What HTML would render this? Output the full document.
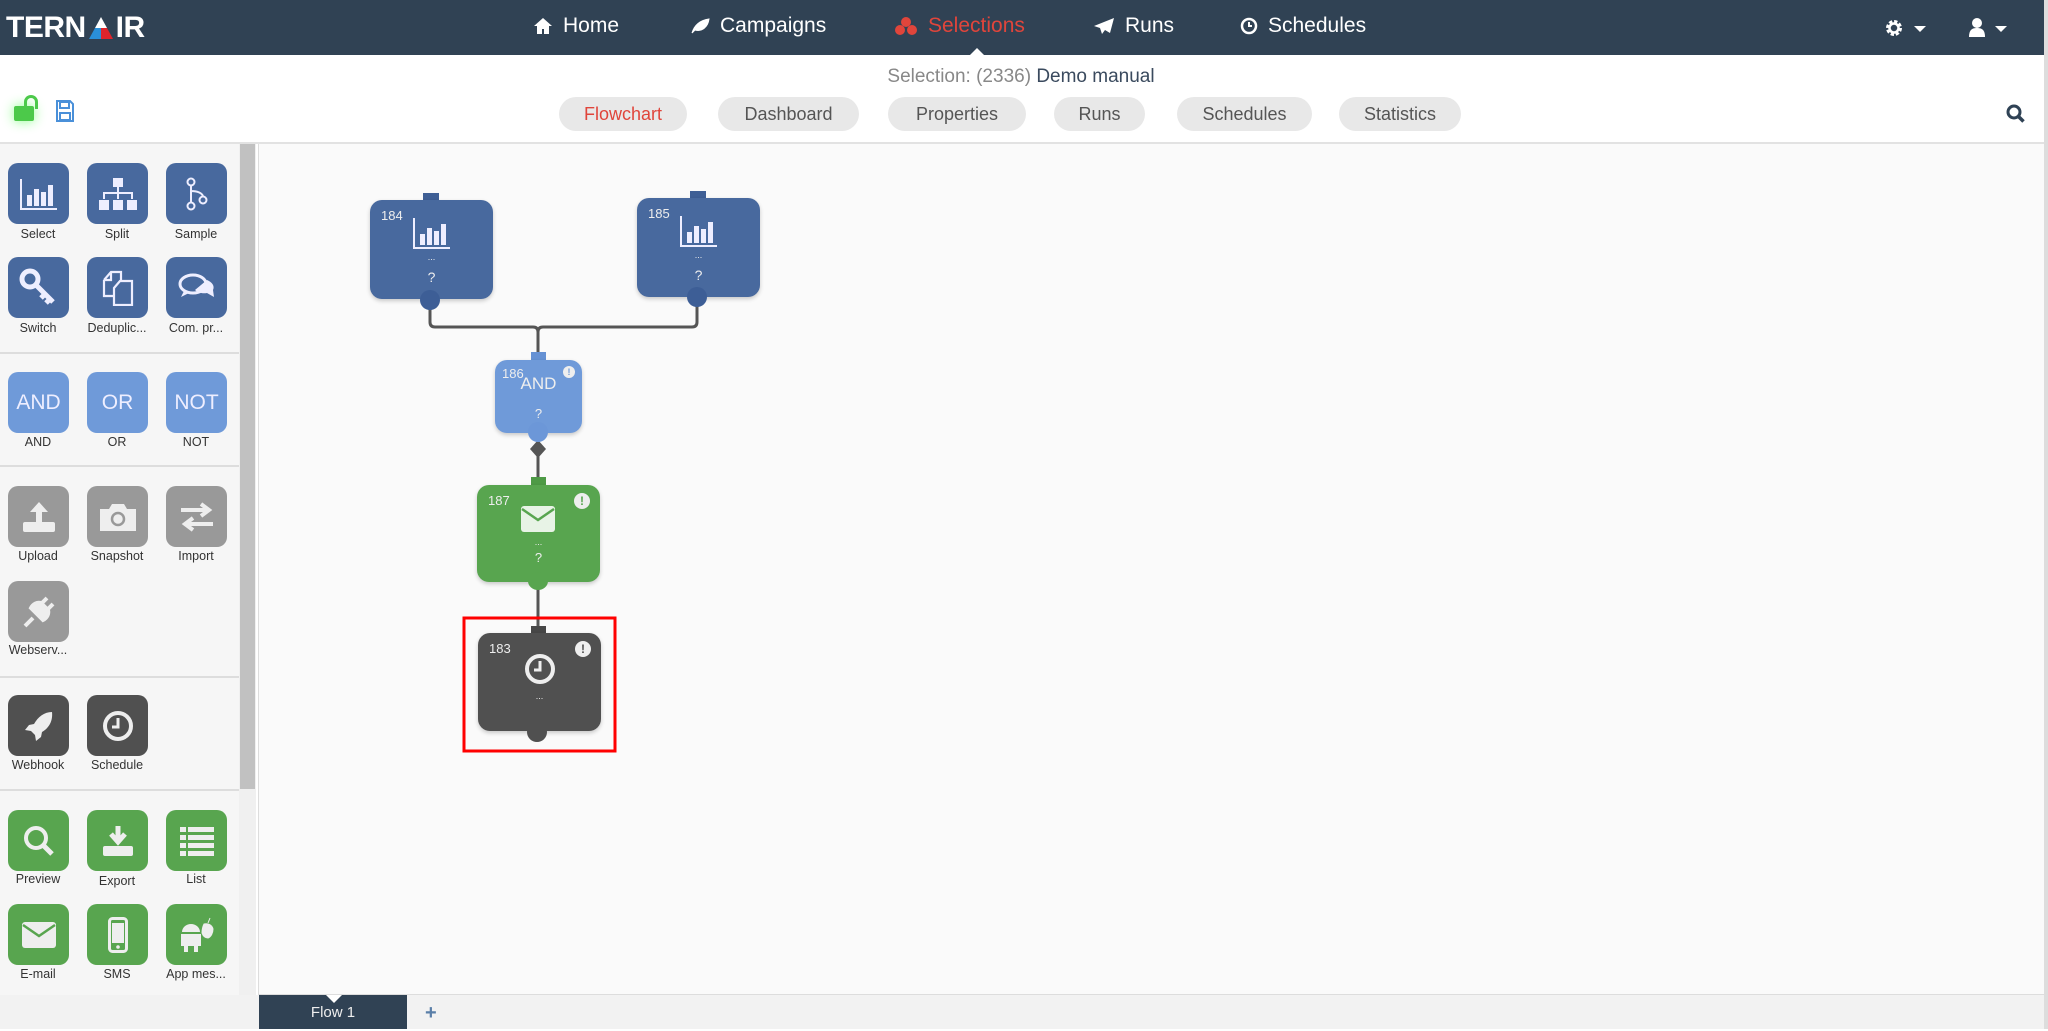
<!DOCTYPE html>
<html><head><meta charset="utf-8"><style>
*{margin:0;padding:0;box-sizing:border-box}
body{width:2048px;height:1029px;overflow:hidden;position:relative;background:#fff;font-family:"Liberation Sans",sans-serif}
.abs{position:absolute}
#nav{left:0;top:0;width:2048px;height:55px;background:#304254}
.nv{position:absolute;top:14px;color:#fff;font-size:21px;display:flex;align-items:center;gap:10px}
.pill{position:absolute;top:97px;height:34px;border-radius:17px;background:#e8e8e8;color:#555;font-size:18px;display:flex;align-items:center;justify-content:center}
.tile{position:absolute;width:61px;height:61px;border-radius:10px;display:flex;align-items:center;justify-content:center;color:#eef;font-size:21px}
.lbl{position:absolute;width:78px;text-align:center;font-size:12.5px;color:#333;white-space:nowrap}
.b{background:#48699e}.lb{background:#6f9ad9}.g{background:#999}.d{background:#505050}.gr{background:#58a54f}
.hr{position:absolute;left:0;width:239px;height:2px;background:#ddd}
.node{position:absolute;border-radius:12px;box-shadow:0 2px 4px rgba(0,0,0,.2);color:#eee}
.num{position:absolute;left:11px;top:8px;font-size:13px}
.ex{position:absolute;right:10px;top:8px;width:16px;height:16px;border-radius:50%;background:#eee;color:#444;font-size:12px;font-weight:bold;text-align:center;line-height:16px}
</style></head><body>
<div id="nav" class="abs">
 <div class="abs" style="left:6px;top:11px;color:#fff;font-weight:bold;font-size:30px;letter-spacing:-0.5px;display:flex;align-items:flex-end">TERN<svg width="28" height="24" viewBox="0 0 28 24" style="margin:0 1px 5px 1px"><path d="M14 1L8 12h12z" fill="#fff"/><path d="M8 12L2 23h12V12z" fill="#2a8fd8"/><path d="M14 12v11h12L20 12z" fill="#e0242b"/></svg>IR</div>
 <div class="nv" style="left:533px"><svg width="20" height="18" viewBox="0 0 20 18"><path d="M10 1L1 9h3v8h5v-5h2v5h5V9h3z" fill="#fff"/></svg>Home</div>
 <div class="nv" style="left:690px"><svg width="20" height="18" viewBox="0 0 20 18"><path d="M2 16C5 6 12 3 19 2 18 10 12 15 5 13M2 16l8-8" fill="#fff" stroke="#fff"/></svg>Campaigns</div>
 <div class="nv" style="left:894px;color:#e0453b"><svg width="24" height="20" viewBox="0 0 24 20"><circle cx="12" cy="6" r="5" fill="#e0453b"/><circle cx="6" cy="14" r="5" fill="#e0453b"/><circle cx="18" cy="14" r="5" fill="#e0453b"/></svg>Selections</div>
 <div class="nv" style="left:1093px"><svg width="22" height="18" viewBox="0 0 22 18"><path d="M21 1L1 9l6 2 2 6 3-4 5 3z" fill="#fff"/></svg>Runs</div>
 <div class="nv" style="left:1240px"><svg width="18" height="18" viewBox="0 0 18 18"><circle cx="9" cy="9" r="7" fill="none" stroke="#fff" stroke-width="2.5"/><path d="M9 5v4h3" stroke="#fff" stroke-width="2" fill="none"/></svg>Schedules</div>
 <div class="abs" style="left:970px;top:48px;width:0;height:0;border-left:7px solid transparent;border-right:7px solid transparent;border-bottom:7px solid #fff"></div>
 <svg class="abs" style="left:1884px;top:18px" width="20" height="20" viewBox="0 0 20 20"><circle cx="10" cy="10" r="6" fill="none" stroke="#fff" stroke-width="4" stroke-dasharray="3 1.7"/><circle cx="10" cy="10" r="4.5" fill="none" stroke="#fff" stroke-width="2.5"/></svg>
 <div class="abs" style="left:1914px;top:26px;border-left:6px solid transparent;border-right:6px solid transparent;border-top:6px solid #fff"></div>
 <svg class="abs" style="left:1968px;top:17px" width="18" height="20" viewBox="0 0 18 20"><circle cx="9" cy="6" r="5" fill="#fff"/><path d="M1 20c0-7 3-9 8-9s8 2 8 9z" fill="#fff"/></svg>
 <div class="abs" style="left:1995px;top:26px;border-left:6px solid transparent;border-right:6px solid transparent;border-top:6px solid #fff"></div>
</div>
<div class="abs" style="left:0;top:66px;width:2048px;text-align:center;font-size:19px;color:#888"><span style="position:relative;left:-3px">Selection: (2336) <span style="color:#3a4a5e">Demo manual</span></span></div>
<div class="abs" style="left:14px;top:106px;width:20px;height:15px;background:#4cc94a;border-radius:2px;box-shadow:0 0 12px #8f8"></div>
<div class="abs" style="top:95px;width:14px;height:14px;border:3px solid #4cc94a;border-bottom:none;border-radius:7px 7px 0 0;left:24px"></div>
<svg class="abs" style="left:56px;top:100px" width="18" height="22" viewBox="0 0 18 22"><path d="M1 1h13l3 3v17H1z" fill="none" stroke="#4a90d9" stroke-width="2"/><rect x="4" y="2" width="9" height="6" fill="none" stroke="#4a90d9" stroke-width="2"/><rect x="4" y="13" width="10" height="7" fill="none" stroke="#4a90d9" stroke-width="2"/></svg>
<div class="pill" style="left:559px;width:128px;color:#e0453b">Flowchart</div>
<div class="pill" style="left:718px;width:141px">Dashboard</div>
<div class="pill" style="left:888px;width:138px">Properties</div>
<div class="pill" style="left:1054px;width:91px">Runs</div>
<div class="pill" style="left:1177px;width:135px">Schedules</div>
<div class="pill" style="left:1339px;width:122px">Statistics</div>
<svg class="abs" style="left:2006px;top:104px" width="20" height="20" viewBox="0 0 20 20"><circle cx="8" cy="8" r="6" fill="none" stroke="#2f4255" stroke-width="3"/><path d="M12.5 12.5l5 5" stroke="#2f4255" stroke-width="3.5"/></svg>
<div class="abs" style="left:0;top:142px;width:2048px;height:2px;background:#e2e2e2"></div>
<div class="abs" style="left:2044px;top:0;width:4px;height:1029px;background:#ddd"></div>
<div class="abs" style="left:0;top:144px;width:239px;height:851px;background:#f6f6f6"></div>
<div class="abs" style="left:239px;top:144px;width:17px;height:851px;background:#f0f0f0"></div>
<div class="abs" style="left:240px;top:144px;width:15px;height:645px;background:#c1c1c1"></div>
<div class="abs" style="left:258px;top:144px;width:1786px;height:851px;background:#fafafa;border-left:1px solid #ddd;border-bottom:1px solid #ddd"></div>
<div class="abs" style="left:0;top:995px;width:2044px;height:34px;background:#f2f2f2"></div>
<div class="abs" style="left:259px;top:995px;width:148px;height:34px;background:#304254;color:#eee;font-size:15px;text-align:center;line-height:36px">Flow 1</div>
<div class="abs" style="left:326px;top:995px;border-left:8px solid transparent;border-right:8px solid transparent;border-top:8px solid #fff"></div>
<div class="abs" style="left:425px;top:1002px;color:#5a7fa8;font-size:20px;font-weight:bold">+</div>
<div class="hr" style="top:352px"></div><div class="hr" style="top:465px"></div><div class="hr" style="top:676px"></div><div class="hr" style="top:789px"></div>
<div class="tile b" style="left:8px;top:163px"><svg width="40" height="34" viewBox="0 0 40 34"><path d="M2 2v30h36" stroke="#eef" stroke-width="2" fill="none"/><rect x="8" y="18" width="5" height="11" fill="#eef"/><rect x="15" y="12" width="5" height="17" fill="#eef"/><rect x="22" y="15" width="5" height="14" fill="#eef"/><rect x="29" y="8" width="5" height="21" fill="#eef"/></svg></div>
<div class="tile b" style="left:87px;top:163px"><svg width="40" height="34" viewBox="0 0 40 34"><rect x="15" y="1" width="10" height="9" fill="#eef"/><path d="M20 10v6M6 22v-6h28v6M20 16v6" stroke="#eef" stroke-width="2" fill="none"/><rect x="1" y="23" width="10" height="10" fill="#eef"/><rect x="15" y="23" width="10" height="10" fill="#eef"/><rect x="29" y="23" width="10" height="10" fill="#eef"/></svg></div>
<div class="tile b" style="left:166px;top:163px"><svg width="24" height="34" viewBox="0 0 24 34"><circle cx="6" cy="5" r="3.5" fill="none" stroke="#eef" stroke-width="2"/><circle cx="6" cy="29" r="3.5" fill="none" stroke="#eef" stroke-width="2"/><circle cx="18" cy="23" r="3.5" fill="none" stroke="#eef" stroke-width="2"/><path d="M6 9v16M6 14c6 0 12 2 12 6" stroke="#eef" stroke-width="2" fill="none"/></svg></div>
<div class="lbl" style="left:-1px;top:227px">Select</div><div class="lbl" style="left:78px;top:227px">Split</div><div class="lbl" style="left:157px;top:227px">Sample</div>
<div class="tile b" style="left:8px;top:257px"><svg width="40" height="40" viewBox="0 0 40 40"><circle cx="11" cy="11" r="8" fill="none" stroke="#eef" stroke-width="5"/><path d="M16 16l18 18M26 26l-4 4M31 31l-4 4" stroke="#eef" stroke-width="5"/></svg></div>
<div class="tile b" style="left:87px;top:257px"><svg width="34" height="36" viewBox="0 0 34 36"><path d="M3 10l7-8h10v8M3 10v16h9M3 10h7V2" stroke="#eef" stroke-width="2.2" fill="none"/><path d="M13 18l6-7h12v24H13z" stroke="#eef" stroke-width="2.2" fill="none"/></svg></div>
<div class="tile b" style="left:166px;top:257px"><svg width="40" height="34" viewBox="0 0 40 34"><ellipse cx="16" cy="13" rx="13" ry="9" fill="none" stroke="#eef" stroke-width="3"/><path d="M7 20l-3 6 8-4" fill="#eef"/><path d="M30 9c5 2 8 6 6 10l1 7-7-4c-5 1-10-1-12-3" fill="#eef"/></svg></div>
<div class="lbl" style="left:-1px;top:321px">Switch</div><div class="lbl" style="left:78px;top:321px">Deduplic...</div><div class="lbl" style="left:157px;top:321px">Com. pr...</div>
<div class="tile lb" style="left:8px;top:372px">AND</div><div class="tile lb" style="left:87px;top:372px">OR</div><div class="tile lb" style="left:166px;top:372px">NOT</div>
<div class="lbl" style="left:-1px;top:435px">AND</div><div class="lbl" style="left:78px;top:435px">OR</div><div class="lbl" style="left:157px;top:435px">NOT</div>
<div class="tile g" style="left:8px;top:486px"><svg width="36" height="34" viewBox="0 0 36 34"><path d="M18 2l-9 10h6v10h6V12h6z" fill="#eee"/><rect x="2" y="22" width="32" height="10" rx="2" fill="#eee"/></svg></div>
<div class="tile g" style="left:87px;top:486px"><svg width="40" height="32" viewBox="0 0 40 32"><path d="M2 8h9l3-5h12l3 5h9v22H2z" fill="#eee"/><circle cx="20" cy="18" r="6" fill="none" stroke="#999" stroke-width="2.5"/></svg></div>
<div class="tile g" style="left:166px;top:486px"><svg width="36" height="30" viewBox="0 0 36 30"><path d="M2 8h26M22 2l8 6-8 6M34 22H8M14 16l-8 6 8 6" stroke="#eee" stroke-width="4" fill="none"/></svg></div>
<div class="lbl" style="left:-1px;top:549px">Upload</div><div class="lbl" style="left:78px;top:549px">Snapshot</div><div class="lbl" style="left:157px;top:549px">Import</div>
<div class="tile g" style="left:8px;top:581px"><svg width="36" height="36" viewBox="0 0 36 36"><path d="M4 32l8-8M10 14l12 12c4-2 6-6 5-10L20 9c-4-1-8 1-10 5zM20 10l6-6M26 16l6-6" stroke="#eee" stroke-width="4" fill="#eee"/></svg></div>
<div class="lbl" style="left:-1px;top:643px">Webserv...</div>
<div class="tile d" style="left:8px;top:695px"><svg width="34" height="34" viewBox="0 0 34 34"><path d="M30 3c-8 0-14 5-18 12l-5 1-4 5 6 1 4 4 1 6 5-4 1-5c7-4 11-11 10-20z" fill="#eee"/></svg></div>
<div class="tile d" style="left:87px;top:695px"><svg width="34" height="34" viewBox="0 0 34 34"><circle cx="17" cy="17" r="13" fill="none" stroke="#eee" stroke-width="4"/><path d="M17 9v9h-6" stroke="#eee" stroke-width="3" fill="none"/></svg></div>
<div class="lbl" style="left:-1px;top:758px">Webhook</div><div class="lbl" style="left:78px;top:758px">Schedule</div>
<div class="tile gr" style="left:8px;top:810px"><svg width="34" height="34" viewBox="0 0 34 34"><circle cx="14" cy="14" r="10" fill="none" stroke="#eee" stroke-width="4"/><path d="M21 21l9 9" stroke="#eee" stroke-width="5"/></svg></div>
<div class="tile gr" style="left:87px;top:810px"><svg width="34" height="34" viewBox="0 0 34 34"><path d="M17 2v14M10 10l7 8 7-8" stroke="#eee" stroke-width="5" fill="none"/><rect x="2" y="22" width="30" height="10" rx="2" fill="#eee"/></svg></div>
<div class="tile gr" style="left:166px;top:810px"><svg width="36" height="30" viewBox="0 0 36 30"><g fill="#eee"><rect x="1" y="1" width="6" height="5"/><rect x="9" y="1" width="26" height="5"/><rect x="1" y="9" width="6" height="5"/><rect x="9" y="9" width="26" height="5"/><rect x="1" y="17" width="6" height="5"/><rect x="9" y="17" width="26" height="5"/><rect x="1" y="25" width="6" height="5"/><rect x="9" y="25" width="26" height="5"/></g></svg></div>
<div class="lbl" style="left:-1px;top:872px">Preview</div><div class="lbl" style="left:78px;top:874px">Export</div><div class="lbl" style="left:157px;top:872px">List</div>
<div class="tile gr" style="left:8px;top:904px"><svg width="36" height="28" viewBox="0 0 36 28"><rect x="1" y="1" width="34" height="26" rx="3" fill="#eee"/><path d="M2 4l16 11L34 4" stroke="#58a54f" stroke-width="2.5" fill="none"/></svg></div>
<div class="tile gr" style="left:87px;top:904px"><svg width="20" height="36" viewBox="0 0 20 36"><rect x="1.5" y="1.5" width="17" height="33" rx="3" fill="none" stroke="#eee" stroke-width="3"/><rect x="4" y="6" width="12" height="20" fill="#eee"/><circle cx="10" cy="30" r="1.8" fill="#eee"/></svg></div>
<div class="tile gr" style="left:166px;top:904px"><svg width="38" height="38" viewBox="0 0 38 38"><path d="M4 16a9 8 0 0 1 18 0z M3 18h20v12H3z M6 30h4v6H6zM16 30h4v6h-4z" fill="#eee"/><path d="M26 8c4-1 8 1 9 5 0 4-2 8-5 9-3 0-5-2-6-5 0-4 1-7 2-9zM30 7l2-5" fill="#eee" stroke="#eee"/></svg></div>
<div class="lbl" style="left:-1px;top:967px">E-mail</div><div class="lbl" style="left:78px;top:967px">SMS</div><div class="lbl" style="left:157px;top:967px">App mes...</div>
<svg class="abs" style="left:0;top:0" width="2048" height="1029">
<path d="M430 300V322q0 5 5 5H533q5 0 5 5v28M697 296V322q0 5-5 5H543q-5 0-5 5" stroke="#555" stroke-width="3" fill="none"/>
<path d="M538 432V484M538 580V634" stroke="#555" stroke-width="3"/>
<path d="M538 440l8 9-8 9-8-9z" fill="#555"/>
<rect x="464" y="618" width="151" height="133" fill="none" stroke="red" stroke-width="3"/>
</svg>
<div class="abs" style="left:423px;top:193px;width:16px;height:12px;background:#3f5f95"></div>
<div class="node" style="left:370px;top:200px;width:123px;height:99px;background:#48699e"><div class="num">184</div>
<svg class="abs" style="left:41px;top:16px" width="42" height="34" viewBox="0 0 40 34"><path d="M2 2v30h36" stroke="#eef" stroke-width="2" fill="none"/><rect x="8" y="18" width="5" height="11" fill="#eef"/><rect x="15" y="12" width="5" height="17" fill="#eef"/><rect x="22" y="15" width="5" height="14" fill="#eef"/><rect x="29" y="8" width="5" height="21" fill="#eef"/></svg>
<div class="abs" style="left:0;width:123px;text-align:center;top:52px;font-size:9px">...</div><div class="abs" style="left:0;width:123px;text-align:center;top:69px;font-size:14px">?</div></div>
<div class="abs" style="left:420px;top:290px;width:20px;height:20px;border-radius:50%;background:#3d5e96"></div>
<div class="abs" style="left:690px;top:191px;width:16px;height:12px;background:#3f5f95"></div>
<div class="node" style="left:637px;top:198px;width:123px;height:99px;background:#48699e"><div class="num">185</div>
<svg class="abs" style="left:41px;top:16px" width="42" height="34" viewBox="0 0 40 34"><path d="M2 2v30h36" stroke="#eef" stroke-width="2" fill="none"/><rect x="8" y="18" width="5" height="11" fill="#eef"/><rect x="15" y="12" width="5" height="17" fill="#eef"/><rect x="22" y="15" width="5" height="14" fill="#eef"/><rect x="29" y="8" width="5" height="21" fill="#eef"/></svg>
<div class="abs" style="left:0;width:123px;text-align:center;top:52px;font-size:9px">...</div><div class="abs" style="left:0;width:123px;text-align:center;top:69px;font-size:14px">?</div></div>
<div class="abs" style="left:687px;top:287px;width:20px;height:20px;border-radius:50%;background:#3d5e96"></div>
<div class="abs" style="left:531px;top:352px;width:15px;height:12px;background:#6591d4"></div>
<div class="node" style="left:495px;top:360px;width:87px;height:73px;background:#6f9ad9"><div class="num" style="left:7px;top:6px">186</div><div class="ex" style="right:7px;top:6px;width:12px;height:12px;line-height:12px;font-size:9px;color:#6f9ad9">!</div>
<div class="abs" style="left:0;width:87px;text-align:center;top:14px;font-size:17px">AND</div><div class="abs" style="left:0;width:87px;text-align:center;top:46px;font-size:13px">?</div></div>
<div class="abs" style="left:528px;top:422px;width:20px;height:20px;border-radius:50%;background:#6c97d8"></div>
<div class="abs" style="left:531px;top:477px;width:15px;height:12px;background:#4e9a46"></div>
<div class="node" style="left:477px;top:485px;width:123px;height:97px;background:#58a54f"><div class="num">187</div><div class="ex" style="color:#58a54f">!</div>
<svg class="abs" style="left:43px;top:20px" width="36" height="28" viewBox="0 0 36 28"><rect x="1" y="1" width="34" height="26" rx="3" fill="#e8f3e6"/><path d="M2 4l16 11L34 4" stroke="#58a54f" stroke-width="2.5" fill="none"/></svg>
<div class="abs" style="left:0;width:123px;text-align:center;top:52px;font-size:9px">...</div><div class="abs" style="left:0;width:123px;text-align:center;top:65px;font-size:13px">?</div></div>
<div class="abs" style="left:528px;top:572px;width:20px;height:18px;border-radius:50%;background:#58a54f"></div>
<div class="abs" style="left:531px;top:626px;width:15px;height:12px;background:#474747"></div>
<div class="node" style="left:478px;top:633px;width:123px;height:98px;background:#505050"><div class="num">183</div><div class="ex" style="color:#505050">!</div>
<svg class="abs" style="left:45px;top:19px" width="34" height="34" viewBox="0 0 34 34"><circle cx="17" cy="17" r="13" fill="none" stroke="#eee" stroke-width="4"/><path d="M17 9v9h-6" stroke="#eee" stroke-width="3" fill="none"/></svg>
<div class="abs" style="left:0;width:123px;text-align:center;top:58px;font-size:9px">...</div></div>
<div class="abs" style="left:527px;top:722px;width:20px;height:20px;border-radius:50%;background:#505050"></div>
</body></html>
